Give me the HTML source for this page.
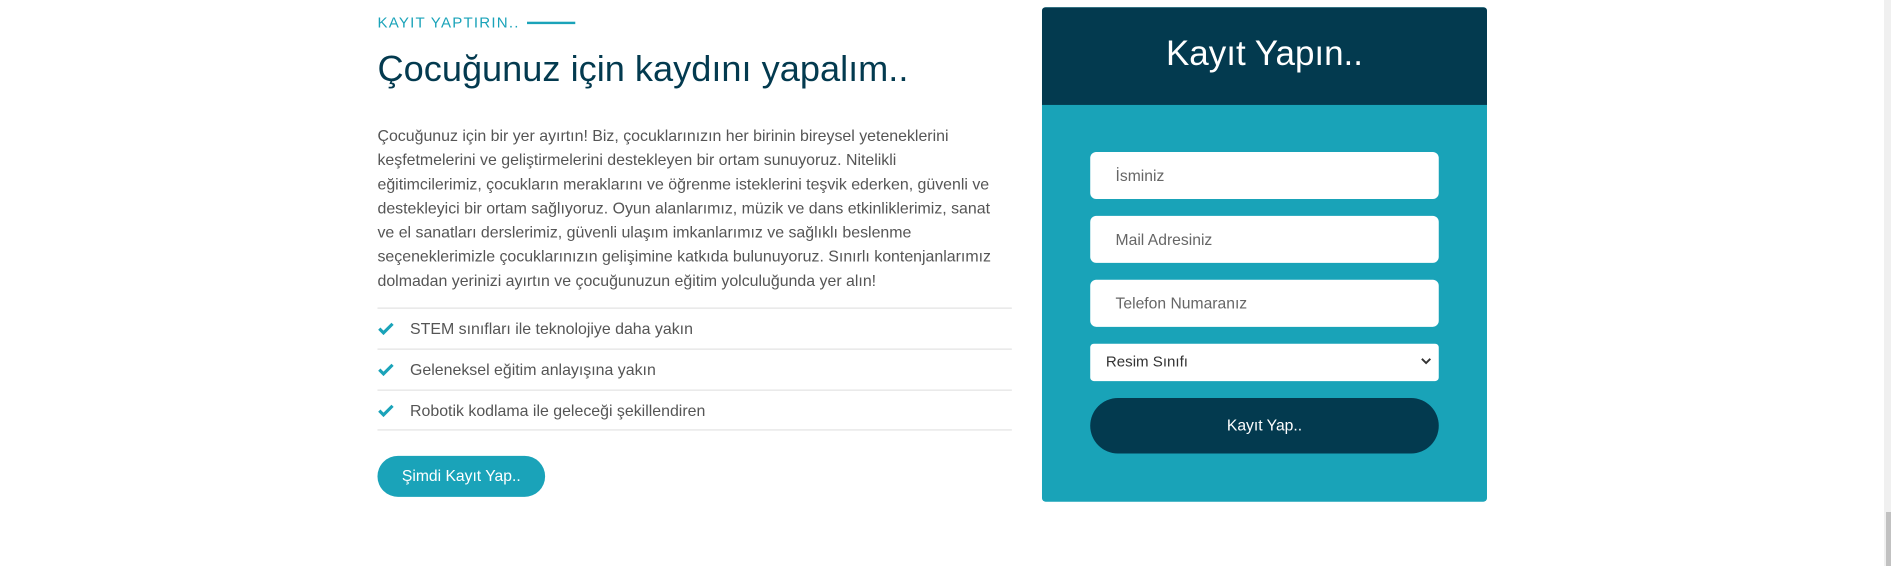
<!DOCTYPE html>
<html><head><meta charset="utf-8"><style>
*{margin:0;padding:0;box-sizing:border-box}
body{width:1891px;height:566px;background:#fff;font-family:"Liberation Sans",sans-serif;position:relative;overflow:hidden}
.wrap{position:absolute;left:0;top:0;width:1568px;height:470px;transform:scale(1.206);transform-origin:0 0}
.sub{position:absolute;left:313px;top:12px;font-size:12.5px;letter-spacing:1px;color:#1aa3b9}
.subline{position:absolute;left:437px;top:18px;width:40px;height:2px;background:#1aa3b9}
h1{position:absolute;left:313px;top:41px;font-size:30px;font-weight:normal;color:#033a4f;letter-spacing:0px}
.p{position:absolute;left:313px;top:103px;width:560px;font-size:13.2px;line-height:20px;color:#555;white-space:nowrap}
.list{position:absolute;left:313px;top:255px;width:526px}
.list div{height:34px;border-top:1px solid #e2e2e2;font-size:13.2px;color:#555;line-height:33px;padding-left:27px;position:relative}
.list div:last-child{border-bottom:1px solid #e2e2e2}
.list svg{position:absolute;left:0;top:11px}
.btn1{position:absolute;left:313px;top:378px;width:139px;height:34px;border-radius:17px;background:#1aa3b9;color:#fff;font-size:13px;text-align:center;line-height:34px}
.panel{position:absolute;left:864px;top:6px;width:369px;height:410px;background:#19a3b8;border-radius:3px;overflow:hidden}
.head{height:81px;background:#033a4f;color:#fff;font-size:29px;text-align:center;line-height:78px}
.in{position:absolute;left:40px;width:289px;height:39px;background:#fff;border-radius:5px;font-size:13px;color:#666;padding-left:21px;line-height:39px}
.sel{position:absolute;left:40px;top:279px;width:289px;height:31px;background:#fff;border-radius:3px;font-size:12.5px;color:#333;padding-left:13px;line-height:31px}
.btn2{position:absolute;left:40px;top:324px;width:289px;height:46px;border-radius:23px;background:#033a4f;color:#fff;font-size:13px;text-align:center;line-height:46px}
.track{position:absolute;left:1884px;top:0;width:7px;height:566px;background:#f0f0f0}
.thumb{position:absolute;left:1886px;top:512px;width:5px;height:54px;background:#c1c1c1}
</style></head><body>
<div class="wrap">
<div class="sub">KAYIT YAPTIRIN..</div><div class="subline"></div>
<h1>Çocuğunuz için kaydını yapalım..</h1>
<div class="p">Çocuğunuz için bir yer ayırtın! Biz, çocuklarınızın her birinin bireysel yeteneklerini<br>keşfetmelerini ve geliştirmelerini destekleyen bir ortam sunuyoruz. Nitelikli<br>eğitimcilerimiz, çocukların meraklarını ve öğrenme isteklerini teşvik ederken, güvenli ve<br>destekleyici bir ortam sağlıyoruz. Oyun alanlarımız, müzik ve dans etkinliklerimiz, sanat<br>ve el sanatları derslerimiz, güvenli ulaşım imkanlarımız ve sağlıklı beslenme<br>seçeneklerimizle çocuklarınızın gelişimine katkıda bulunuyoruz. Sınırlı kontenjanlarımız<br>dolmadan yerinizi ayırtın ve çocuğunuzun eğitim yolculuğunda yer alın!</div>
<div class="list">
<div><svg width="14" height="11" viewBox="0 0 14 11"><path d="M1.5 5.5L5 9L12.5 1.5" stroke="#1aa3b9" stroke-width="2.6" fill="none"/></svg>STEM sınıfları ile teknolojiye daha yakın</div>
<div><svg width="14" height="11" viewBox="0 0 14 11"><path d="M1.5 5.5L5 9L12.5 1.5" stroke="#1aa3b9" stroke-width="2.6" fill="none"/></svg>Geleneksel eğitim anlayışına yakın</div>
<div><svg width="14" height="11" viewBox="0 0 14 11"><path d="M1.5 5.5L5 9L12.5 1.5" stroke="#1aa3b9" stroke-width="2.6" fill="none"/></svg>Robotik kodlama ile geleceği şekillendiren</div>
</div>
<div class="btn1">Şimdi Kayıt Yap..</div>
<div class="panel">
<div class="head">Kayıt Yapın..</div>
<div class="in" style="top:120px">İsminiz</div>
<div class="in" style="top:173px">Mail Adresiniz</div>
<div class="in" style="top:226px">Telefon Numaranız</div>
<div class="sel">Resim Sınıfı<svg style="position:absolute;right:6px;top:11px" width="9" height="7" viewBox="0 0 9 7"><path d="M1 1.5L4.5 5L8 1.5" stroke="#333" stroke-width="1.6" fill="none"/></svg></div>
<div class="btn2">Kayıt Yap..</div>
</div>
</div>
<div class="track"></div><div class="thumb"></div>
</body></html>
